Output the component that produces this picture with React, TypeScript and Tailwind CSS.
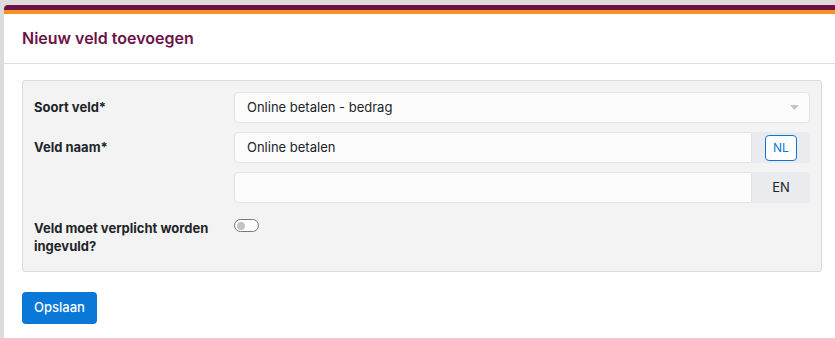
export default function App() {
  return (
    <div className="h-[338px] w-[835px] overflow-hidden bg-[#dcdcdc] pl-[4px] pt-[5px] font-['Inter',sans-serif] text-[#212529]">
      <div className="h-full w-[840px] overflow-hidden rounded-tl-[4px] bg-white">
        <div className="h-[5px] bg-[#6d1247]" />
        <div className="h-[4px] bg-[#f7901e]" />
        <div className="border-b border-[#dedede] px-[18px] pb-[13px] pt-[12px]">
          <h1 className="text-[16px] font-semibold leading-[24px] text-[#6d1247]">Nieuw veld toevoegen</h1>
        </div>
        <div className="px-[18px] pt-[16px]">
          <div className="w-[800px] rounded-[3px] border border-[#dadada] bg-[#f3f3f3] px-[11px] pb-[16px] pt-[11px]">
            <div className="flex items-start">
              <label className="w-[200px] pt-[6px] text-[13px] font-bold leading-[18px]">Soort veld*</label>
              <div className="flex h-[31px] flex-1 items-center justify-between rounded-[4px] border border-[#e3e3e3] bg-[#fcfcfc] pl-[12px] pr-[10px] text-[13px]">
                <span>Online betalen - bedrag</span>
                <svg width="9" height="5" viewBox="0 0 9 5">
                  <path d="M0 0h9L4.5 5z" fill="#c4c4c4" />
                </svg>
              </div>
            </div>
            <div className="mt-[9px] flex items-start">
              <label className="w-[200px] pt-[6px] text-[13px] font-bold leading-[18px]">Veld naam*</label>
              <div className="flex flex-1 flex-col gap-[9px]">
                <div className="flex h-[31px]">
                  <div className="flex flex-1 items-center rounded-l-[4px] border border-[#e3e3e3] bg-[#fcfcfc] pl-[12px] text-[13px]">
                    Online betalen
                  </div>
                  <div className="flex w-[58px] items-center justify-center rounded-r-[4px] bg-[#e9ebee]">
                    <span className="flex h-[26px] w-[32px] items-center justify-center rounded-[4px] border border-[#0a78d8] bg-white text-[12px] text-[#0a78d8]">NL</span>
                  </div>
                </div>
                <div className="flex h-[31px]">
                  <div className="flex-1 rounded-l-[4px] border border-[#e3e3e3] bg-[#fcfcfc]" />
                  <div className="flex w-[58px] items-center justify-center rounded-r-[4px] bg-[#e9ebee] text-[13px]">EN</div>
                </div>
              </div>
            </div>
            <div className="mt-[16px] flex items-start">
              <label className="w-[200px] text-[13px] font-bold leading-[18px]">Veld moet verplicht worden ingevuld?</label>
              <div className="flex h-[13px] w-[25px] items-center rounded-full border border-[#777] bg-white pl-[2px]">
                <span className="h-[8px] w-[8px] rounded-full bg-[#c4c4c4]" />
              </div>
            </div>
          </div>
          <button className="mt-[20px] h-[32px] w-[75px] rounded-[4px] bg-[#0a78d8] text-[13px] font-medium text-white">Opslaan</button>
        </div>
      </div>
    </div>
  );
}
